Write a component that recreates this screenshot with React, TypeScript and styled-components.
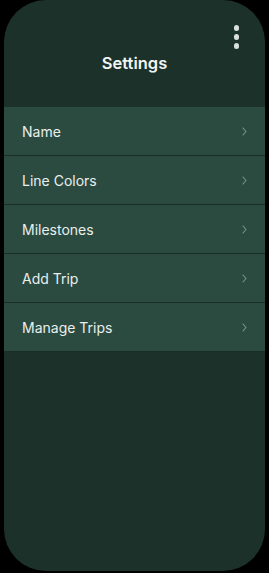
import React from "react";
import styled, { createGlobalStyle } from "styled-components";

const Global = createGlobalStyle`
  html, body { margin: 0; padding: 0; background: #000; }
  body { font-family: "Inter", "Liberation Sans", sans-serif; -webkit-font-smoothing: antialiased; }
`;

const Screen = styled.div`
  width: 269px;
  height: 573px;
  background: #000;
  padding: 0 4px 2px 4px;
  box-sizing: border-box;
`;

const Phone = styled.div`
  height: 571px;
  background: #1d312b;
  border-radius: 42px;
  overflow: hidden;
  display: flex;
  flex-direction: column;
`;

const Header = styled.div`
  position: relative;
  height: 107px;
  display: flex;
  align-items: flex-start;
  justify-content: center;
  box-sizing: border-box;
  padding-top: 51px;
`;

const Title = styled.div`
  color: #f1f5f2;
  font-size: 16.5px;
  font-weight: 600;
  line-height: 24px;
`;

const Kebab = styled.div`
  position: absolute;
  right: 26px;
  top: 25px;
  display: flex;
  flex-direction: column;
  gap: 3.5px;
`;

const Dot = styled.span`
  width: 5.5px;
  height: 5.5px;
  border-radius: 50%;
  background: #d8e0db;
`;

const List = styled.div`
  display: flex;
  flex-direction: column;
  gap: 1px;
  background: #1a2d27;
  padding-bottom: 1px;
`;

const Row = styled.div`
  height: 48px;
  background: #2b4b41;
  display: flex;
  align-items: center;
  justify-content: space-between;
  padding: 0 18px 0 18px;
  color: #e9efeb;
  font-size: 14px;
`;

const Chevron = styled.svg`
  width: 5px;
  height: 9px;
`;

const items = ["Name", "Line Colors", "Milestones", "Add Trip", "Manage Trips"];

export default function App() {
  return (
    <>
      <Global />
      <Screen>
        <Phone>
          <Header>
            <Title>Settings</Title>
            <Kebab>
              <Dot />
              <Dot />
              <Dot />
            </Kebab>
          </Header>
          <List>
            {items.map((t) => (
              <Row key={t}>
                <span>{t}</span>
                <Chevron viewBox="0 0 5 9">
                  <path d="M1 1 L4 4.5 L1 8" fill="none" stroke="#7f938b" strokeWidth="1.1" strokeLinecap="round" strokeLinejoin="round" />
                </Chevron>
              </Row>
            ))}
          </List>
        </Phone>
      </Screen>
    </>
  );
}
